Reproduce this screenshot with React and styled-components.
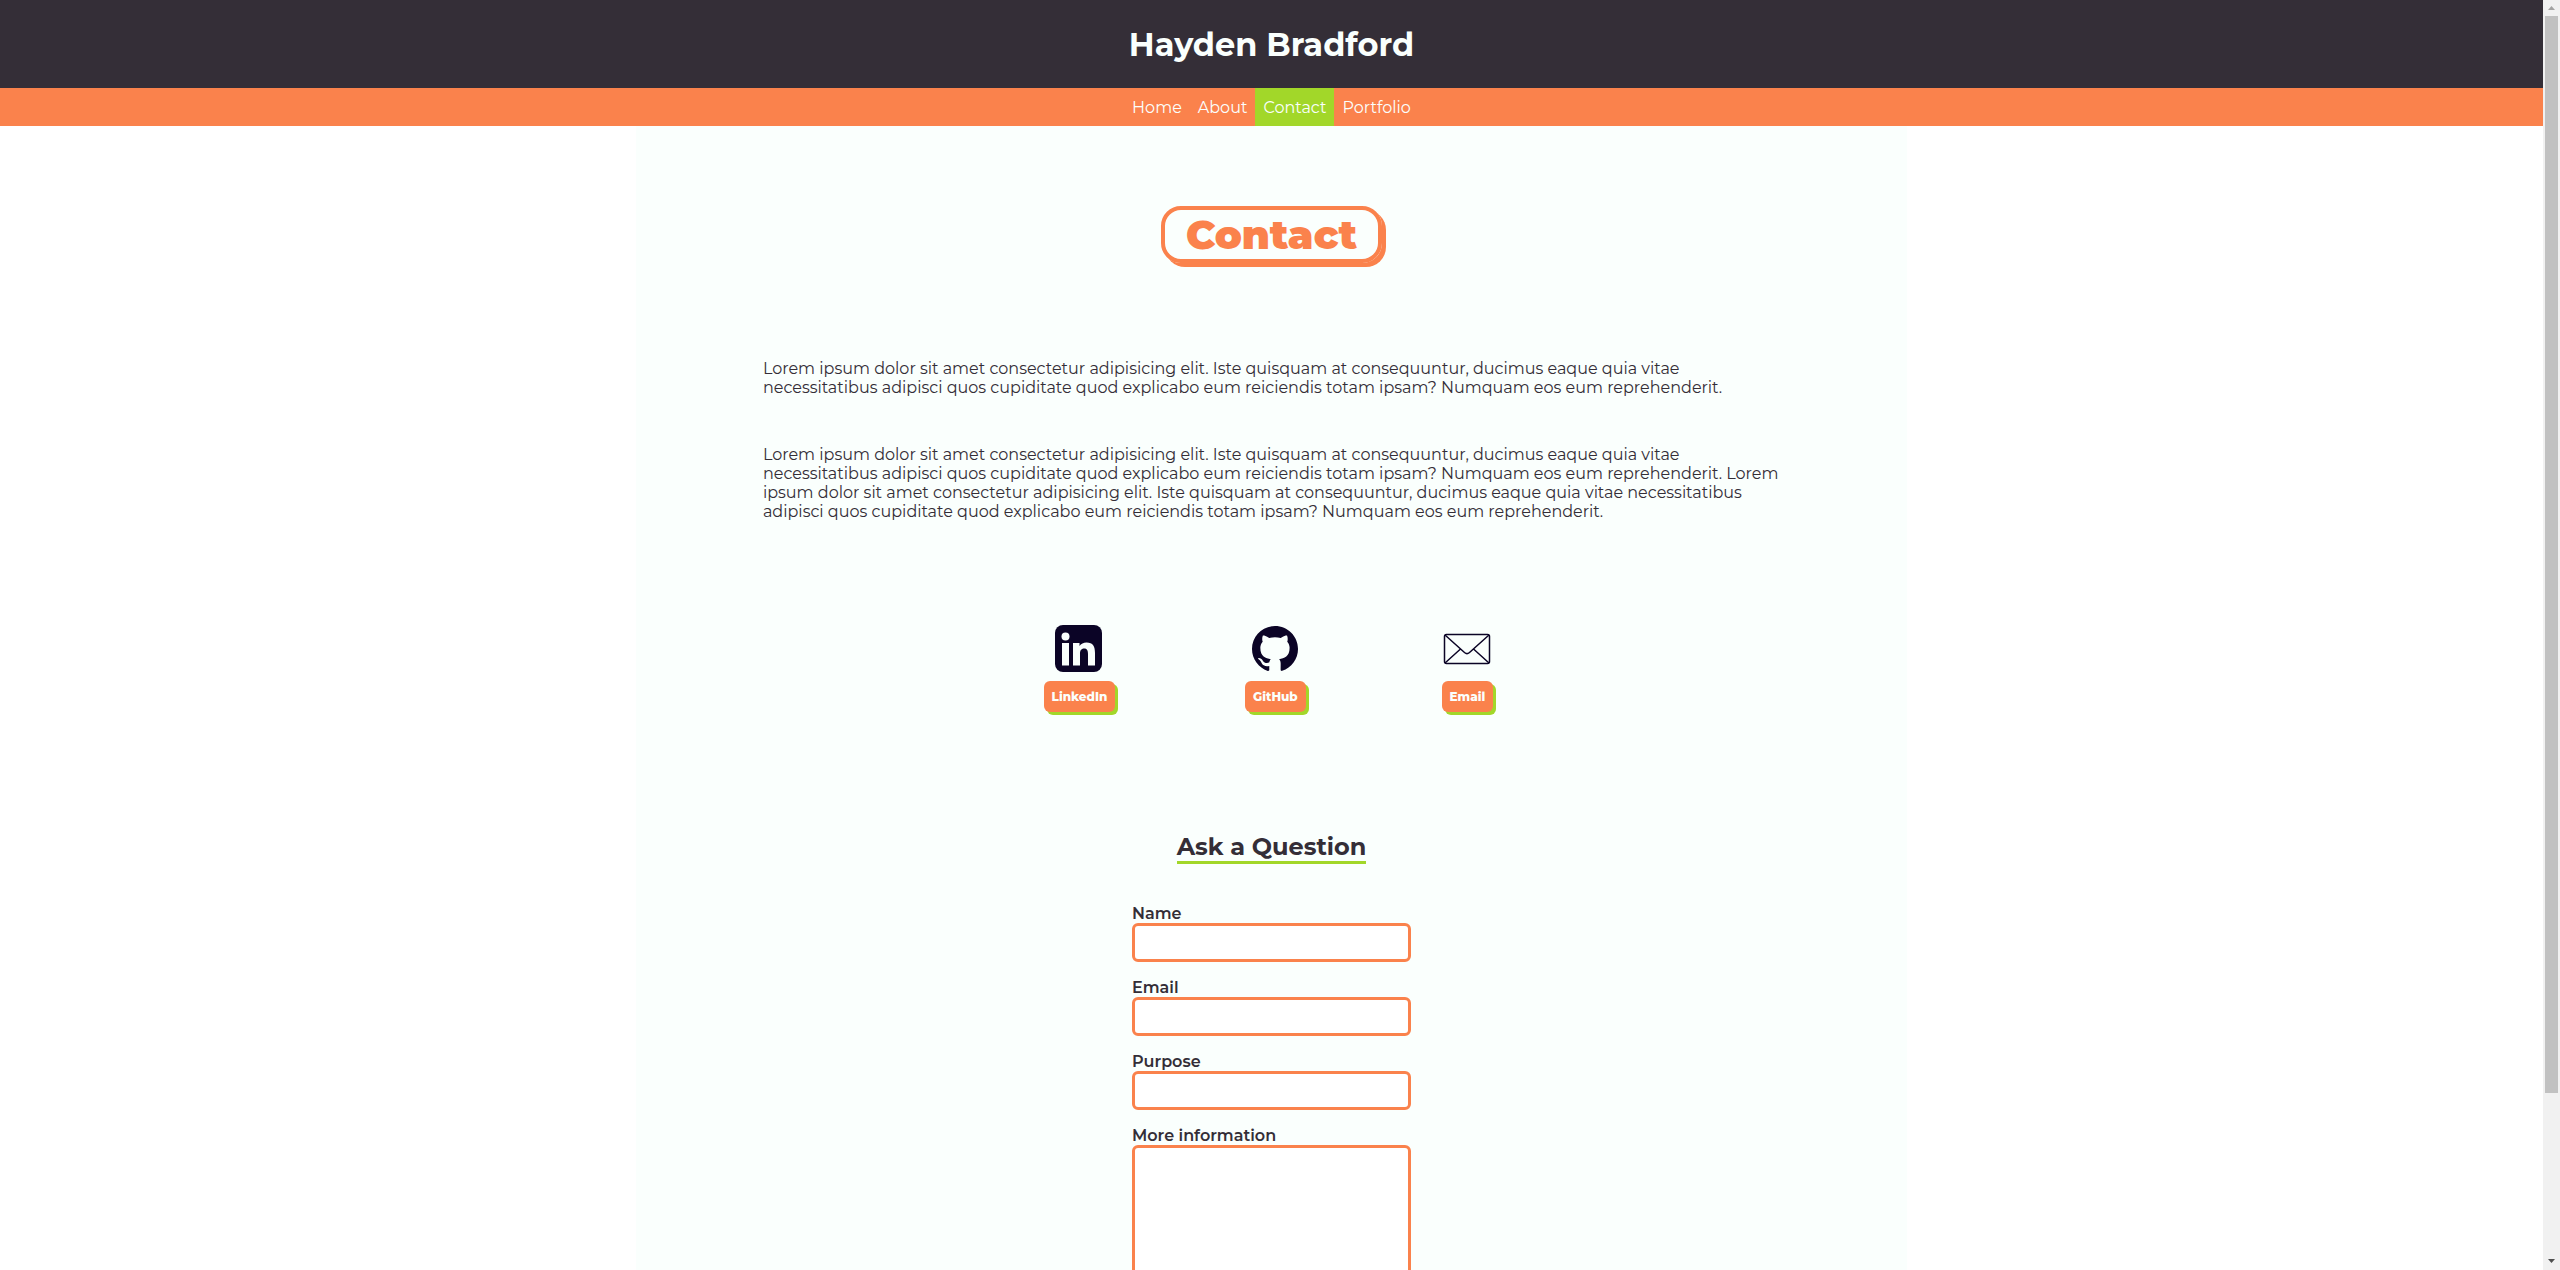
import React from "react";
import styled, { createGlobalStyle } from "styled-components";

const color = {
  dark: "#342e37",
  orange: "#fa824c",
  green: "#a2d729",
  mint: "#fafffd",
  ink: "#0b0426",
};

const GlobalStyle = createGlobalStyle`
  *, *::before, *::after { box-sizing: border-box; }
  body {
    margin: 0;
    overflow: hidden;
    background: #fff;
    color: ${color.dark};
    font: 400 16px/19px Montserrat, Inter, "Open Sans", sans-serif;
  }
  h1, h2, p { margin: 0; }
  a { color: inherit; text-decoration: none; }
`;

const Shell = styled.div`
  display: flex;
  height: 100vh;
`;

const Viewport = styled.div`
  flex: 1;
  min-width: 0;
  overflow-y: auto;
  scrollbar-width: none;
`;

const Header = styled.header`
  padding: 25px 24px 24px;
  background: ${color.dark};
  color: ${color.mint};
  font-size: 32px;
  font-weight: 700;
  line-height: 39px;
  text-align: center;
`;

const Nav = styled.nav`
  display: flex;
  justify-content: center;
  background: ${color.orange};
`;

const NavLink = styled.a`
  padding: 10px 8px 9px;
  color: ${color.mint};
  background: ${(p) => (p.$active ? color.green : "transparent")};
`;

const Main = styled.main`
  display: flex;
  flex-direction: column;
  align-items: center;
  width: 50%;
  margin: 0 auto;
  padding: 80px 0;
  background: ${color.mint};
`;

const PageTitle = styled.h1`
  padding: 0 21px;
  border: 4px solid ${color.orange};
  border-radius: 20px;
  box-shadow: 4px 4px 0 ${color.orange};
  color: ${color.orange};
  font-size: 40px;
  font-weight: 900;
  line-height: 49px;
`;

const Copy = styled.section`
  display: flex;
  flex-direction: column;
  gap: 48px;
  width: 80%;
  margin-top: 96px;
`;

const Socials = styled.ul`
  display: flex;
  gap: 128px;
  margin: 96px 0 0;
  padding: 0;
  list-style: none;
`;

const Social = styled.li`
  display: flex;
  flex-direction: column;
  align-items: center;
`;

const SocialIcon = styled.svg`
  display: block;
  width: 64px;
  height: 64px;
  color: ${color.ink};
`;

const SocialLink = styled.a`
  padding: 6px 8px;
  border-radius: 6px;
  background: ${color.orange};
  box-shadow: 3px 3px 0 ${color.green};
  color: ${color.mint};
  font-size: 12px;
  font-weight: 800;
`;

const FormTitle = styled.h2`
  margin-top: 120px;
  border-bottom: 3px solid ${color.green};
  font-size: 24px;
  font-weight: 700;
  line-height: 29px;
`;

const Form = styled.form`
  display: flex;
  flex-direction: column;
  gap: 16px;
  width: 279px;
  margin-top: 40px;
`;

const Field = styled.div`
  display: flex;
  flex-direction: column;
`;

const Label = styled.label`
  font-weight: 600;
`;

const Input = styled.input`
  width: 100%;
  height: 39px;
  padding: 8px;
  border: 3px solid ${color.orange};
  border-radius: 6px;
  background: #fff;
  font: inherit;
  outline: none;
`;

const TextArea = styled(Input)`
  display: block;
  height: 200px;
  resize: none;
`;

const Scrollbar = styled.div`
  display: flex;
  flex-direction: column;
  align-items: center;
  width: 17px;
  background: #f1f1f1;
`;

const Arrow = styled.svg`
  display: block;
  width: 17px;
  height: 16px;
`;

const Track = styled.div`
  flex: 1;
  width: 13px;
`;

const Thumb = styled.div`
  height: 87%;
  background: #c1c1c1;
`;

const links = ["Home", "About", "Contact", "Portfolio"];

const LinkedInIcon = () => (
  <SocialIcon viewBox="0 0 64 64" aria-hidden="true">
    <rect x="8" y="8" width="47" height="47" rx="8" fill="currentColor" />
    <g fill={color.mint}>
      <circle cx="18.500" cy="19.500" r="4" />
      <path d="M15 26h7v22.500h-7z" />
      <path d="M26 26h6.500v3c1.500-2.400 4-3.600 7-3.600 6.500 0 8.500 4 8.500 10.500v12.600h-7V37c0-3-.6-5.500-3.800-5.500-3.200 0-4.200 2.300-4.200 5.400v11.600h-7z" />
    </g>
  </SocialIcon>
);

const GitHubIcon = () => (
  <SocialIcon viewBox="0 0 64 64" aria-hidden="true">
    <g transform="translate(9 8.500) scale(1.917)">
      <path
        fill="currentColor"
        d="M12 .297c-6.630 0-12 5.373-12 12 0 5.303 3.438 9.800 8.205 11.385.6.113.82-.258.82-.577 0-.285-.01-1.040-.015-2.040-3.338.724-4.042-1.610-4.042-1.610C4.422 18.070 3.633 17.700 3.633 17.700c-1.087-.744.084-.729.084-.729 1.205.084 1.838 1.236 1.838 1.236 1.070 1.835 2.809 1.305 3.495.998.108-.776.417-1.305.76-1.605-2.665-.3-5.466-1.332-5.466-5.930 0-1.310.465-2.380 1.235-3.220-.135-.303-.54-1.523.105-3.176 0 0 1.005-.322 3.300 1.230.96-.267 1.980-.399 3-.405 1.020.006 2.040.138 3 .405 2.280-1.552 3.285-1.230 3.285-1.230.645 1.653.24 2.873.12 3.176.765.84 1.230 1.910 1.230 3.220 0 4.610-2.805 5.625-5.475 5.920.42.36.81 1.096.81 2.220 0 1.606-.015 2.896-.015 3.286 0 .315.21.69.825.57C20.565 22.092 24 17.592 24 12.297c0-6.627-5.373-12-12-12"
      />
    </g>
  </SocialIcon>
);

const MailIcon = () => (
  <SocialIcon viewBox="0 0 64 64" aria-hidden="true">
    <g fill="none" stroke="currentColor" strokeWidth="1.500" strokeLinejoin="round">
      <rect x="9.500" y="17.500" width="45" height="29" rx="2" />
      <path d="M10 18l19.500 17.500q2.500 2.300 5 0L54 18M10 46l15.500-14M54 46L38.500 32" />
    </g>
  </SocialIcon>
);

const socials = [
  { name: "LinkedIn", Icon: LinkedInIcon },
  { name: "GitHub", Icon: GitHubIcon },
  { name: "Email", Icon: MailIcon },
];

const fields = [
  { id: "name", label: "Name", type: "text" },
  { id: "email", label: "Email", type: "email" },
  { id: "purpose", label: "Purpose", type: "text" },
];

const lorem =
  "Lorem ipsum dolor sit amet consectetur adipisicing elit. Iste quisquam at consequuntur, ducimus eaque quia vitae necessitatibus adipisci quos cupiditate quod explicabo eum reiciendis totam ipsam? Numquam eos eum reprehenderit.";

export default function App() {
  return (
    <Shell>
      <GlobalStyle />
      <Viewport>
        <Header>Hayden Bradford</Header>
        <Nav>
          {links.map((name) => (
            <NavLink key={name} href={`#${name.toLowerCase()}`} $active={name === "Contact"}>
              {name}
            </NavLink>
          ))}
        </Nav>
        <Main>
          <PageTitle>Contact</PageTitle>
          <Copy>
            <p>{lorem}</p>
            <p>{`${lorem} ${lorem}`}</p>
          </Copy>
          <Socials>
            {socials.map(({ name, Icon }) => (
              <Social key={name}>
                <Icon />
                <SocialLink href={`#${name.toLowerCase()}`}>{name}</SocialLink>
              </Social>
            ))}
          </Socials>
          <FormTitle>Ask a Question</FormTitle>
          <Form>
            {fields.map(({ id, label, type }) => (
              <Field key={id}>
                <Label htmlFor={id}>{label}</Label>
                <Input id={id} type={type} />
              </Field>
            ))}
            <Field>
              <Label htmlFor="info">More information</Label>
              <TextArea as="textarea" id="info" />
            </Field>
          </Form>
        </Main>
      </Viewport>
      <Scrollbar aria-hidden="true">
        <Arrow viewBox="0 0 17 16">
          <path d="M5 10h7L8.500 6z" fill="#a3a3a3" />
        </Arrow>
        <Track>
          <Thumb />
        </Track>
        <Arrow viewBox="0 0 17 16">
          <path d="M5 5h7L8.500 9z" fill="#505050" />
        </Arrow>
      </Scrollbar>
    </Shell>
  );
}
